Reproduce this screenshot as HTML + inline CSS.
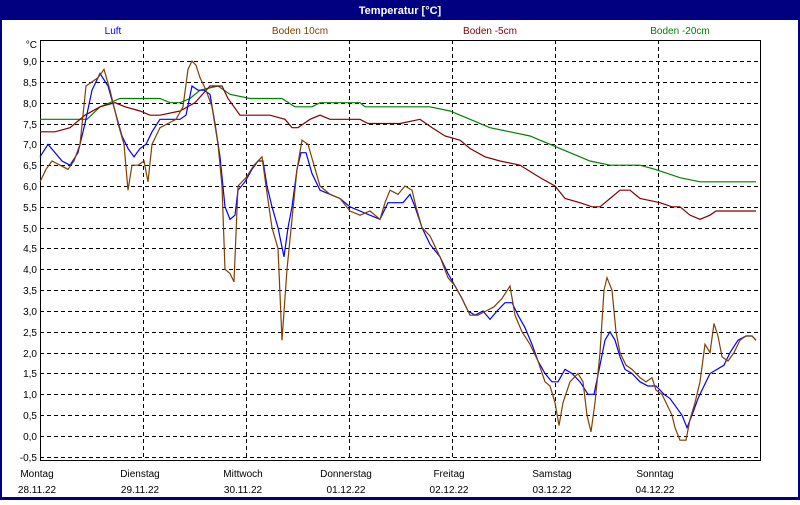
<!DOCTYPE html>
<html><head><meta charset="utf-8"><style>
body{margin:0;width:800px;height:500px;overflow:hidden;background:#fff;font-family:"Liberation Sans",sans-serif}
svg text{font-family:"Liberation Sans",sans-serif;font-size:10px}
</style></head><body>
<svg width="800" height="500" viewBox="0 0 800 500" xmlns="http://www.w3.org/2000/svg">
<rect x="0" y="0" width="800" height="500" fill="#000080"/>
<rect x="2" y="20" width="796" height="477" fill="#fff"/>
<text x="400" y="14" fill="#fff" text-anchor="middle" font-weight="bold" style="font-size:11px">Temperatur [°C]</text>
<text x="113" y="34" fill="#0000ff" text-anchor="middle">Luft</text>
<text x="300" y="34" fill="#804000" text-anchor="middle">Boden 10cm</text>
<text x="490" y="34" fill="#800000" text-anchor="middle">Boden -5cm</text>
<text x="680" y="34" fill="#008000" text-anchor="middle">Boden -20cm</text>
<g stroke="#000" stroke-dasharray="4,3" stroke-width="1">
<path d="M40 61.5H760M40 82.5H760M40 103.5H760M40 124.5H760M40 144.5H760M40 165.5H760M40 186.5H760M40 207.5H760M40 228.5H760M40 248.5H760M40 269.5H760M40 290.5H760M40 311.5H760M40 332.5H760M40 353.5H760M40 373.5H760M40 394.5H760M40 415.5H760M40 436.5H760M40 457.5H760"/>
<path d="M143.5 40V461M246.5 40V461M349.5 40V461M452.5 40V461M555.5 40V461M658.5 40V461"/>
</g>
<rect x="40.5" y="40.5" width="720" height="420" fill="none" stroke="#000"/>
<g text-anchor="end" fill="#000">
<text x="37" y="48">°C</text>
<text x="37" y="65">9,0</text><text x="37" y="86">8,5</text><text x="37" y="107">8,0</text><text x="37" y="128">7,5</text><text x="37" y="148">7,0</text><text x="37" y="169">6,5</text><text x="37" y="190">6,0</text><text x="37" y="211">5,5</text><text x="37" y="232">5,0</text><text x="37" y="252">4,5</text><text x="37" y="273">4,0</text><text x="37" y="294">3,5</text><text x="37" y="315">3,0</text><text x="37" y="336">2,5</text><text x="37" y="357">2,0</text><text x="37" y="377">1,5</text><text x="37" y="398">1,0</text><text x="37" y="419">0,5</text><text x="37" y="440">0,0</text><text x="37" y="461">-0,5</text>
</g>
<g text-anchor="middle" fill="#000">
<text x="37" y="477">Montag</text><text x="37" y="493">28.11.22</text>
<text x="140" y="477">Dienstag</text><text x="140" y="493">29.11.22</text>
<text x="243" y="477">Mittwoch</text><text x="243" y="493">30.11.22</text>
<text x="346" y="477">Donnerstag</text><text x="346" y="493">01.12.22</text>
<text x="449" y="477">Freitag</text><text x="449" y="493">02.12.22</text>
<text x="552" y="477">Samstag</text><text x="552" y="493">03.12.22</text>
<text x="655" y="477">Sonntag</text><text x="655" y="493">04.12.22</text>
</g>
<g transform="matrix(1,0,0,-41.667,0,436)" fill="none" stroke-width="1.2">
<polyline vector-effect="non-scaling-stroke" stroke="#008000" points="40,7.6 87,7.6 100,7.9 120,8.1 160,8.1 170,8 180,8 190,8.1 200,8.3 218,8.4 230,8.2 250,8.1 282,8.1 295,7.9 312,7.9 320,8 360,8 365,7.9 430,7.9 450,7.8 470,7.6 490,7.4 510,7.3 530,7.2 550,7 570,6.8 590,6.6 610,6.5 640,6.5 655,6.4 680,6.2 700,6.1 756,6.1"/>
<polyline vector-effect="non-scaling-stroke" stroke="#800000" points="40,7.3 55,7.3 70,7.4 85,7.7 100,7.9 115,8 125,7.9 140,7.8 150,7.7 160,7.7 180,7.8 195,8 210,8.4 222,8.4 228,8.1 240,7.7 270,7.7 285,7.6 292,7.4 298,7.4 310,7.6 320,7.7 330,7.6 360,7.6 368,7.5 400,7.5 420,7.6 432,7.4 445,7.2 460,7.1 470,6.9 485,6.7 500,6.6 520,6.5 540,6.2 555,6 565,5.7 580,5.6 592,5.5 600,5.5 610,5.7 620,5.9 630,5.9 640,5.7 660,5.6 672,5.5 680,5.5 690,5.3 700,5.2 710,5.3 716,5.4 756,5.4"/>
<polyline vector-effect="non-scaling-stroke" stroke="#0000ff" points="40,6.7 48,7 55,6.8 62,6.6 70,6.5 78,6.8 85,7.5 92,8.3 100,8.7 108,8.4 115,7.8 122,7.2 128,6.9 134,6.7 140,6.9 146,7 152,7.3 160,7.6 170,7.6 180,7.6 186,7.7 192,8.4 198,8.3 204,8.3 210,8.2 215,7.5 220,6.7 225,5.5 230,5.2 235,5.3 238,5.9 245,6.1 252,6.4 258,6.6 263,6.6 267,6 272,5.5 278,5 284,4.3 288,5 292,5.5 297,6.4 301,6.8 306,6.8 312,6.3 320,5.9 330,5.8 340,5.7 350,5.5 360,5.4 370,5.3 380,5.2 388,5.6 395,5.6 403,5.6 410,5.8 415,5.5 422,5 430,4.6 440,4.3 448,3.9 455,3.6 462,3.3 468,3 475,2.9 483,3 490,2.8 497,3 505,3.2 512,3.2 518,2.9 525,2.6 532,2.2 538,1.8 545,1.5 552,1.3 558,1.3 565,1.6 572,1.5 580,1.3 588,1 594,1 600,1.7 605,2.3 610,2.5 615,2.3 620,1.9 625,1.6 632,1.5 640,1.3 648,1.2 656,1.2 664,1 670,0.9 676,0.7 682,0.5 687,0.2 692,0.5 698,0.9 704,1.2 710,1.5 717,1.6 724,1.7 730,2 738,2.3 746,2.4 752,2.4 756,2.3"/>
<polyline vector-effect="non-scaling-stroke" stroke="#804000" points="40,6.1 46,6.4 52,6.6 60,6.5 68,6.4 74,6.6 80,7 86,8.4 92,8.5 98,8.6 104,8.8 110,8.3 118,7.5 124,7 128,5.9 132,6.5 138,6.5 144,6.6 148,6.1 152,7 160,7.4 168,7.5 176,7.6 183,7.9 188,8.8 192,9 196,8.9 200,8.6 206,8.3 212,7.9 218,7 222,6 225,4 230,3.9 234,3.7 238,6 246,6.2 254,6.5 262,6.7 266,6 272,5 278,4.5 282,2.3 287,4 292,5.2 297,6.4 302,7.1 308,7 314,6.5 320,6 330,5.8 340,5.7 350,5.4 360,5.3 370,5.4 380,5.2 385,5.6 390,5.9 398,5.8 405,6 412,5.9 416,5.5 422,5 430,4.8 440,4.3 448,3.8 455,3.6 462,3.3 470,2.9 478,2.9 486,3 494,3.1 502,3.3 510,3.6 515,2.9 522,2.5 530,2.2 538,1.8 545,1.3 550,1.2 555,0.8 559,0.25 563,0.8 570,1.3 578,1.5 583,1.3 587,0.5 591,0.1 595,0.8 600,2 604,3.5 607,3.8 612,3.5 616,2.5 620,2 626,1.7 632,1.6 640,1.4 646,1.3 652,1.4 656,1.1 662,1 668,0.7 672,0.5 675,0.2 680,-0.1 686,-0.1 690,0.4 695,0.8 700,1.3 705,2.2 710,2 714,2.7 718,2.4 722,1.9 728,1.8 734,2 740,2.3 746,2.4 752,2.4 756,2.3"/>
</g>
</svg>
</body></html>
